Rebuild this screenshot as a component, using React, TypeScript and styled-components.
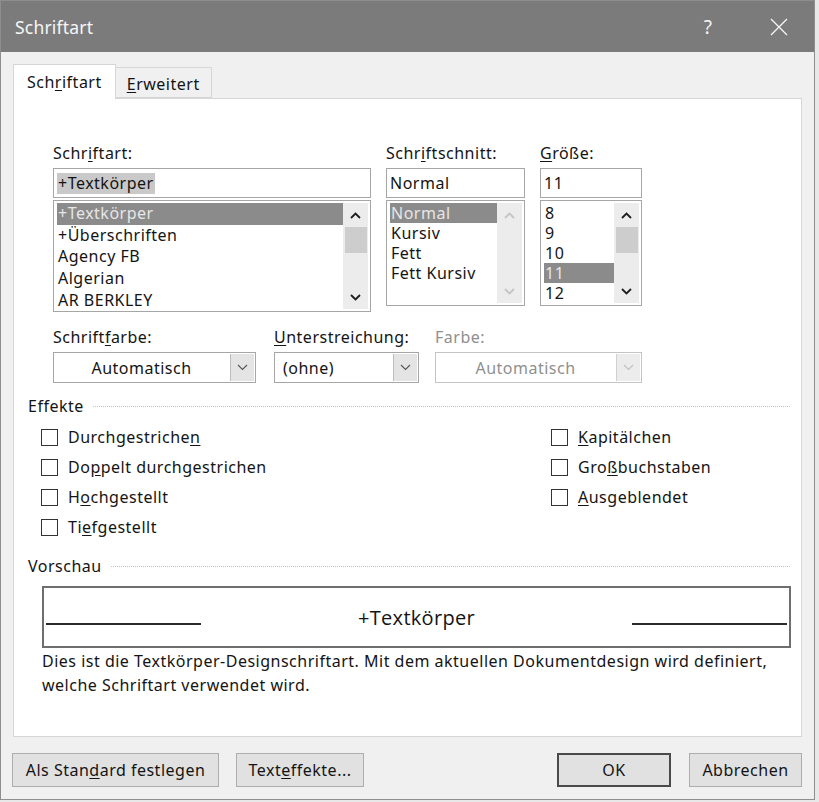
import React from 'react'
import styled, { createGlobalStyle } from 'styled-components'

const GlobalStyle = createGlobalStyle`
  html, body {
    margin: 0;
    padding: 0;
    background: #e8e8e8;
  }
  body {
    font-family: "Noto Sans", "Open Sans", sans-serif;
    font-size: 16px;
    letter-spacing: 0.5px;
    color: #141414;
  }
  * {
    box-sizing: border-box;
  }
`

const Window = styled.div`
  width: 815px;
  height: 800px;
  border: 1px solid #8e8e8e;
  background: #f0f0f0;
  display: flex;
  flex-direction: column;
`

const TitleBar = styled.div`
  height: 51px;
  flex: none;
  background: #7b7b7b;
  color: #f6f6f6;
  display: flex;
  align-items: center;
  padding: 0 12px 0 14px;
  font-size: 17.5px;
  letter-spacing: 0.2px;
`

const Title = styled.span`
  flex: 1;
`

const TitleButton = styled.span<{ $mr?: number }>`
  width: 46px;
  height: 51px;
  margin-right: ${(p) => p.$mr ?? 0}px;
  display: flex;
  align-items: center;
  justify-content: center;
  font-size: 19px;
`

const Body = styled.div`
  flex: 1;
  padding: 0 12px;
  display: flex;
  flex-direction: column;
`

const TabRow = styled.div`
  display: flex;
  align-items: flex-end;
  margin-top: 11px;
  height: 35px;
  position: relative;
  z-index: 1;
`

const Tab = styled.div<{ $active?: boolean }>`
  height: ${(p) => (p.$active ? '35px' : '31px')};
  margin-bottom: ${(p) => (p.$active ? '-1px' : '0')};
  padding: ${(p) => (p.$active ? '0 13px' : '0 11px')};
  background: ${(p) => (p.$active ? '#ffffff' : '#f0f0f0')};
  border: 1px solid #d6d6d6;
  border-bottom: ${(p) => (p.$active ? 'none' : '1px solid #d6d6d6')};
  border-left: ${(p) => (p.$active ? '1px solid #d6d6d6' : 'none')};
  display: flex;
  align-items: center;
  padding-top: ${(p) => (p.$active ? '0' : '2px')};
`

const Panel = styled.div`
  height: 639px;
  flex: none;
  background: #ffffff;
  border: 1px solid #d6d6d6;
  padding: 44px 10px 0 14px;
  display: flex;
  flex-direction: column;
`

const U = styled.span`
  text-decoration: underline;
  text-underline-offset: 2px;
`

const TopGrid = styled.div`
  display: grid;
  grid-template-columns: 318px 139px 102px;
  column-gap: 15px;
  padding-left: 25px;
`

const Field = styled.div<{ $w?: number; $ml?: number }>`
  display: flex;
  flex-direction: column;
  width: ${(p) => (p.$w ? `${p.$w}px` : 'auto')};
  margin-left: ${(p) => p.$ml ?? 0}px;
`

const Label = styled.div<{ $disabled?: boolean }>`
  height: 20px;
  line-height: 20px;
  margin-bottom: 5px;
  white-space: nowrap;
  color: ${(p) => (p.$disabled ? '#8f8f8f' : '#141414')};
`

const TextBox = styled.div`
  height: 30px;
  border: 1px solid #a6a6a6;
  display: flex;
  align-items: center;
  padding-left: 3px;
`

const Selected = styled.span`
  background: #c9c9c9;
  padding: 0 1px;
  line-height: 21px;
`

const List = styled.div<{ $h: number }>`
  height: ${(p) => p.$h}px;
  margin-top: 2px;
  border: 1px solid #a6a6a6;
  display: flex;
  padding: 2px 2px 2px 3px;
  overflow: hidden;
`

const Items = styled.div`
  flex: 1;
  display: flex;
  flex-direction: column;
`

const Item = styled.div<{ $selected?: boolean; $lh: number }>`
  height: ${(p) => p.$lh}px;
  line-height: ${(p) => p.$lh}px;
  flex: none;
  padding-left: 1px;
  white-space: nowrap;
  background: ${(p) => (p.$selected ? '#8b8b8b' : 'transparent')};
  color: ${(p) => (p.$selected ? '#e6e6e6' : '#141414')};
`

const Scroll = styled.div`
  width: 25px;
  flex: none;
  background: #ececec;
  display: flex;
  flex-direction: column;
  align-items: center;
`

const Arrow = styled.div`
  height: 24px;
  width: 100%;
  display: flex;
  align-items: center;
  justify-content: center;
  flex: none;
`

const Thumb = styled.div`
  width: 22px;
  height: 26px;
  background: #cdcdcd;
  flex: none;
`

const Spacer = styled.div`
  flex: 1;
`

const Row2 = styled.div`
  display: flex;
  padding-left: 25px;
  margin-top: 15px;
`

const Combo = styled.div<{ $disabled?: boolean }>`
  height: 31px;
  border: 1px solid ${(p) => (p.$disabled ? '#c4c4c4' : '#a6a6a6')};
  background: #ffffff;
  display: flex;
  color: ${(p) => (p.$disabled ? '#8f8f8f' : '#141414')};
`

const ComboText = styled.div<{ $center?: boolean }>`
  flex: 1;
  display: flex;
  align-items: center;
  justify-content: ${(p) => (p.$center ? 'center' : 'flex-start')};
  padding-left: ${(p) => (p.$center ? '0' : '8px')};
`

const ComboButton = styled.div<{ $disabled?: boolean }>`
  width: 24px;
  flex: none;
  margin: 1px;
  background: ${(p) => (p.$disabled ? '#ececec' : '#e4e4e4')};
  border-left: 1px solid ${(p) => (p.$disabled ? '#d0d0d0' : '#bdbdbd')};
  display: flex;
  align-items: center;
  justify-content: center;
`

const GroupHeader = styled.div<{ $top: number }>`
  display: flex;
  align-items: center;
  height: 20px;
  margin-top: ${(p) => p.$top}px;
  gap: 9px;
`

const Rule = styled.div`
  flex: 1;
  border-top: 1px dotted #c4c4c4;
  margin-right: 1px;
`

const Checks = styled.div`
  display: flex;
  margin-top: 6px;
  padding-left: 13px;
`

const CheckColumn = styled.div<{ $w?: number }>`
  width: ${(p) => (p.$w ? `${p.$w}px` : 'auto')};
  display: flex;
  flex-direction: column;
`

const CheckRow = styled.label`
  height: 30px;
  display: flex;
  align-items: center;
  gap: 10px;
`

const Box = styled.span`
  width: 17px;
  height: 17px;
  border: 1px solid #333333;
  background: #ffffff;
  flex: none;
`

const Preview = styled.div`
  height: 62px;
  margin: 10px 0 0 14px;
  border: 2px solid #6e6e6e;
  display: flex;
  align-items: center;
  padding: 0 2px;
`

const PreviewLine = styled.div`
  width: 155px;
  height: 2px;
  background: #2a2a2a;
  margin-top: 14px;
  flex: none;
`

const PreviewText = styled.div`
  flex: 1;
  text-align: center;
  font-size: 20px;
  letter-spacing: 0.3px;
  font-family: "Open Sans", "Noto Sans", sans-serif;
`

const Description = styled.div`
  margin: 1px 0 0 14px;
  line-height: 24px;
  white-space: nowrap;
`

const ButtonRow = styled.div`
  display: flex;
  margin: 16px 0 0 -1px;
  height: 34px;
`

const Button = styled.div<{ $w: number; $default?: boolean; $gap?: number }>`
  width: ${(p) => p.$w}px;
  margin-left: ${(p) => p.$gap ?? 0}px;
  height: 34px;
  background: #e1e1e1;
  border: ${(p) => (p.$default ? '2px solid #4a4a4a' : '1px solid #adadad')};
  display: flex;
  align-items: center;
  justify-content: center;
`

const Up = ({ light }: { light?: boolean }) => (
  <svg width="11" height="7" viewBox="0 0 11 7">
    <path d="M1 6 L5.5 1.5 L10 6" fill="none" stroke={light ? '#c4c4c4' : '#1e1e1e'} strokeWidth="1.8" />
  </svg>
)

const Down = ({ light }: { light?: boolean }) => (
  <svg width="11" height="7" viewBox="0 0 11 7">
    <path d="M1 1 L5.5 5.5 L10 1" fill="none" stroke={light ? '#c4c4c4' : '#1e1e1e'} strokeWidth="1.8" />
  </svg>
)

const Chevron = ({ light }: { light?: boolean }) => (
  <svg width="11" height="7" viewBox="0 0 11 7">
    <path d="M1 1 L5.5 5.5 L10 1" fill="none" stroke={light ? '#c0c0c0' : '#555555'} strokeWidth="1.1" />
  </svg>
)

const CloseIcon = () => (
  <svg width="18" height="18" viewBox="0 0 18 18">
    <path d="M1 1 L17 17 M17 1 L1 17" stroke="#f6f6f6" strokeWidth="1.3" />
  </svg>
)

const fonts = ['+Textkörper', '+Überschriften', 'Agency FB', 'Algerian', 'AR BERKLEY']
const styles = ['Normal', 'Kursiv', 'Fett', 'Fett Kursiv']
const sizes = ['8', '9', '10', '11', '12']

const Check = ({ children }: { children: React.ReactNode }) => (
  <CheckRow>
    <Box />
    <span>{children}</span>
  </CheckRow>
)

export default function App() {
  return (
    <>
      <GlobalStyle />
      <Window>
        <TitleBar>
          <Title>Schriftart</Title>
          <TitleButton $mr={25}>?</TitleButton>
          <TitleButton>
            <CloseIcon />
          </TitleButton>
        </TitleBar>
        <Body>
          <TabRow>
            <Tab $active>
              Sch<U>r</U>iftart
            </Tab>
            <Tab>
              <U>E</U>rweitert
            </Tab>
          </TabRow>
          <Panel>
            <TopGrid>
              <Field>
                <Label>
                  Schr<U>i</U>ftart:
                </Label>
                <TextBox>
                  <Selected>+Textkörper</Selected>
                </TextBox>
                <List $h={112}>
                  <Items>
                    {fonts.map((f, i) => (
                      <Item key={f} $lh={21.7} $selected={i === 0}>
                        {f}
                      </Item>
                    ))}
                  </Items>
                  <Scroll>
                    <Arrow>
                      <Up />
                    </Arrow>
                    <Thumb />
                    <Spacer />
                    <Arrow>
                      <Down />
                    </Arrow>
                  </Scroll>
                </List>
              </Field>
              <Field>
                <Label>
                  Schr<U>i</U>ftschnitt:
                </Label>
                <TextBox>Normal</TextBox>
                <List $h={106}>
                  <Items>
                    {styles.map((s, i) => (
                      <Item key={s} $lh={20} $selected={i === 0}>
                        {s}
                      </Item>
                    ))}
                  </Items>
                  <Scroll>
                    <Arrow>
                      <Up light />
                    </Arrow>
                    <Spacer />
                    <Arrow>
                      <Down light />
                    </Arrow>
                  </Scroll>
                </List>
              </Field>
              <Field>
                <Label>
                  <U>G</U>röße:
                </Label>
                <TextBox>11</TextBox>
                <List $h={106}>
                  <Items>
                    {sizes.map((s) => (
                      <Item key={s} $lh={20} $selected={s === '11'}>
                        {s}
                      </Item>
                    ))}
                  </Items>
                  <Scroll>
                    <Arrow>
                      <Up />
                    </Arrow>
                    <Thumb />
                    <Spacer />
                    <Arrow>
                      <Down />
                    </Arrow>
                  </Scroll>
                </List>
              </Field>
            </TopGrid>

            <Row2>
              <Field $w={203}>
                <Label>
                  Schrift<U>f</U>arbe:
                </Label>
                <Combo>
                  <ComboText $center>Automatisch</ComboText>
                  <ComboButton>
                    <Chevron />
                  </ComboButton>
                </Combo>
              </Field>
              <Field $w={145} $ml={18}>
                <Label>
                  <U>U</U>nterstreichung:
                </Label>
                <Combo>
                  <ComboText>(ohne)</ComboText>
                  <ComboButton>
                    <Chevron />
                  </ComboButton>
                </Combo>
              </Field>
              <Field $w={207} $ml={16}>
                <Label $disabled>Farbe:</Label>
                <Combo $disabled>
                  <ComboText $center>Automatisch</ComboText>
                  <ComboButton $disabled>
                    <Chevron light />
                  </ComboButton>
                </Combo>
              </Field>
            </Row2>

            <GroupHeader $top={13}>
              <span>Effekte</span>
              <Rule />
            </GroupHeader>
            <Checks>
              <CheckColumn $w={510}>
                <Check>
                  Durchgestriche<U>n</U>
                </Check>
                <Check>
                  Do<U>p</U>pelt durchgestrichen
                </Check>
                <Check>
                  H<U>o</U>chgestellt
                </Check>
                <Check>
                  Ti<U>e</U>fgestellt
                </Check>
              </CheckColumn>
              <CheckColumn>
                <Check>
                  <U>K</U>apitälchen
                </Check>
                <Check>
                  Gro<U>ß</U>buchstaben
                </Check>
                <Check>
                  <U>A</U>usgeblendet
                </Check>
              </CheckColumn>
            </Checks>

            <GroupHeader $top={14}>
              <span>Vorschau</span>
              <Rule />
            </GroupHeader>
            <Preview>
              <PreviewLine />
              <PreviewText>+Textkörper</PreviewText>
              <PreviewLine />
            </Preview>
            <Description>
              Dies ist die Textkörper-Designschriftart. Mit dem aktuellen Dokumentdesign wird definiert,
              <br />
              welche Schriftart verwendet wird.
            </Description>
          </Panel>

          <ButtonRow>
            <Button $w={207}>
              Als Stan<U>d</U>ard festlegen
            </Button>
            <Button $w={128} $gap={17}>
              Text<U>e</U>ffekte...
            </Button>
            <Spacer />
            <Button $w={114} $default>
              OK
            </Button>
            <Button $w={113} $gap={18}>
              Abbrechen
            </Button>
          </ButtonRow>
        </Body>
      </Window>
    </>
  )
}
